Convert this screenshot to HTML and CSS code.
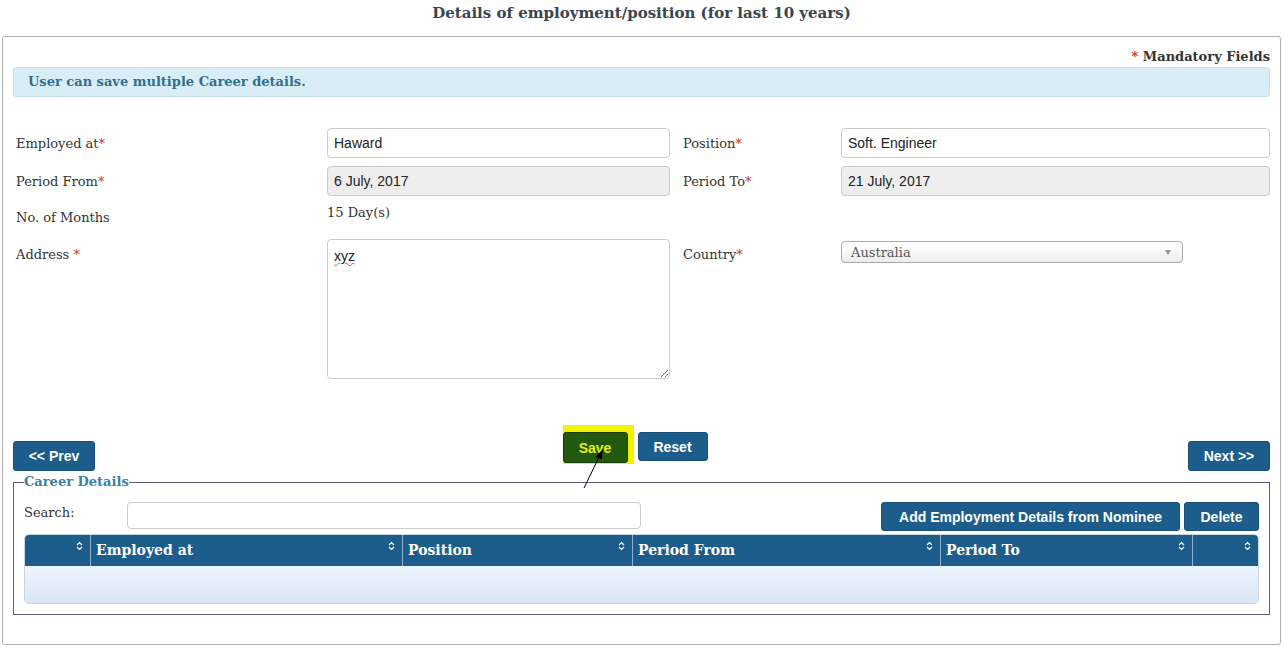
FILE: index.html
```html
<!DOCTYPE html>
<html lang="en">
<head>
    <meta charset="UTF-8">
    <meta name="viewport" content="width=device-width, initial-scale=1.0">
    <title>Career Details</title>
    <link rel="stylesheet" href="styles.css">
</head>
<body>
    <h1 class="page-title">Details of employment/position (for last 10 years)</h1>

    <div class="panel">
        <div class="mandatory"><span class="req">*</span> Mandatory Fields</div>
        <div class="info-bar">User can save multiple Career details.</div>

        <div class="form-grid">
            <label class="lbl">Employed at<span class="req">*</span></label>
            <input class="field" type="text" value="Haward">
            <label class="lbl lbl-right">Position<span class="req">*</span></label>
            <input class="field" type="text" value="Soft. Engineer">

            <label class="lbl">Period From<span class="req">*</span></label>
            <input class="field" type="text" value="6 July, 2017" disabled>
            <label class="lbl lbl-right">Period To<span class="req">*</span></label>
            <input class="field" type="text" value="21 July, 2017" disabled>

            <label class="lbl lbl-months">No. of Months</label>
            <div class="months">15 Day(s)</div>
            <div></div>
            <div></div>

            <label class="lbl lbl-address">Address <span class="req">*</span></label>
            <textarea class="field area">xyz</textarea>
            <label class="lbl lbl-right lbl-address">Country<span class="req">*</span></label>
            <div class="select-box">
                <span>Australia</span>
                <span class="caret"></span>
            </div>
        </div>

        <div class="nav-row">
            <button class="btn btn-prev">&lt;&lt; Prev</button>
            <div class="center-btns">
                <span class="highlight"><button class="btn btn-save">Save</button></span>
                <button class="btn btn-reset">Reset</button>
            </div>
            <button class="btn btn-next">Next &gt;&gt;</button>
        </div>

        <fieldset class="career">
            <legend>Career Details</legend>
            <div class="search-row">
                <label class="search-lbl">Search:</label>
                <input class="search-input" type="text">
                <div class="tool-btns">
                    <button class="btn btn-tool btn-add">Add Employment Details from Nominee</button>
                    <button class="btn btn-tool btn-del">Delete</button>
                </div>
            </div>

            <div class="grid">
                <div class="grid-head">
                    <div class="th th-check"><span></span><svg class="sort" viewBox="0 0 7 10"><path d="M1 4 L3.5 1.5 L6 4 M1 6 L3.5 8.5 L6 6"/></svg></div>
                    <div class="th th-emp"><span>Employed at</span><svg class="sort" viewBox="0 0 7 10"><path d="M1 4 L3.5 1.5 L6 4 M1 6 L3.5 8.5 L6 6"/></svg></div>
                    <div class="th th-pos"><span>Position</span><svg class="sort" viewBox="0 0 7 10"><path d="M1 4 L3.5 1.5 L6 4 M1 6 L3.5 8.5 L6 6"/></svg></div>
                    <div class="th th-from"><span>Period From</span><svg class="sort" viewBox="0 0 7 10"><path d="M1 4 L3.5 1.5 L6 4 M1 6 L3.5 8.5 L6 6"/></svg></div>
                    <div class="th th-to"><span>Period To</span><svg class="sort" viewBox="0 0 7 10"><path d="M1 4 L3.5 1.5 L6 4 M1 6 L3.5 8.5 L6 6"/></svg></div>
                    <div class="th th-act"><span></span><svg class="sort" viewBox="0 0 7 10"><path d="M1 4 L3.5 1.5 L6 4 M1 6 L3.5 8.5 L6 6"/></svg></div>
                </div>
                <div class="grid-body"></div>
            </div>
        </fieldset>
    </div>

    <!-- annotation arrow pointing at Save -->
    <svg class="arrow" width="40" height="56" viewBox="0 0 40 56">
        <line x1="9" y1="48" x2="25" y2="15" stroke="#000" stroke-width="1"/>
        <polygon points="28,9 26.8,19.5 20.5,16.5" fill="#000"/>
    </svg>
</body>
</html>
```

FILE: styles.css
```css
* {
    box-sizing: border-box;
}

body {
    margin: 0;
    padding: 0 4px 0 2px;
    font-family: "DejaVu Serif", serif;
    font-size: 13px;
    color: #333;
    background: #fff;
}

.page-title {
    margin: 0;
    height: 36px;
    line-height: 26px;
    text-align: center;
    font-size: 15px;
    font-weight: bold;
    color: #3a4550;
}

.panel {
    border: 1px solid #b0b0b0;
    border-radius: 3px;
    padding: 10px 10px 29px;
}

.req {
    color: #c9302c;
}

.mandatory {
    text-align: right;
    line-height: 20px;
    font-weight: bold;
    color: #333;
}

.info-bar {
    height: 30px;
    line-height: 28px;
    padding: 0 14px;
    background: #d9edf7;
    border: 1px solid #c4e3f0;
    border-radius: 3px;
    color: #31708f;
    font-weight: bold;
}

/* form */
.form-grid {
    margin-top: 31px;
    display: grid;
    grid-template-columns: 314px 343px 171px 1fr;
    row-gap: 8px;
    align-items: start;
}

.lbl {
    padding: 6px 0 0 3px;
    line-height: 20px;
}

.lbl-right {
    padding-left: 13px;
}

.lbl-months {
    padding-top: 4px;
    height: 27px;
}

.lbl-address {
    padding-top: 6px;
}

.field {
    width: 100%;
    height: 30px;
    padding: 0 6px;
    border: 1px solid #ccc;
    border-radius: 4px;
    font-family: "Liberation Sans", Arial, sans-serif;
    font-size: 14px;
    color: #222;
    background: #fff;
}

.field:disabled {
    background: #eee;
    color: #222;
}

.months {
    line-height: 18px;
}

.area {
    height: 140px;
    padding: 8px 6px;
    resize: vertical;
    text-decoration: underline wavy #d9534f;
    text-decoration-thickness: 1px;
}

.select-box {
    margin-top: 2px;
    width: 342px;
    height: 22px;
    display: flex;
    align-items: center;
    justify-content: space-between;
    padding: 0 11px 0 9px;
    border: 1px solid #aaa;
    border-radius: 4px;
    background: linear-gradient(#fff 20%, #ececec);
    color: #555;
    font-size: 13px;
}

.caret {
    width: 0;
    height: 0;
    border-left: 3px solid transparent;
    border-right: 3px solid transparent;
    border-top: 5px solid #999;
}

/* buttons */
.nav-row {
    margin-top: 46px;
    min-height: 46px;
    display: flex;
    justify-content: space-between;
    align-items: flex-end;
}

.center-btns {
    align-self: flex-start;
    display: flex;
    align-items: flex-start;
    gap: 4px;
    margin-right: 13px;
}

.btn {
    height: 30px;
    padding: 0 14px;
    border: 1px solid #174f78;
    border-radius: 3px;
    background: #1c5d8c;
    color: #fff;
    font-family: "Liberation Sans", Arial, sans-serif;
    font-size: 14px;
    font-weight: bold;
    cursor: pointer;
}

.btn-prev {
    width: 82px;
}

.btn-next {
    width: 82px;
}

.highlight {
    display: block;
    padding: 7px 6px 1px 0;
    background: #f2f200;
}

.btn-save {
    width: 65px;
    height: 31px;
    background: #22590f;
    border-color: #163d08;
    color: #e4ee1c;
}

.btn-reset {
    width: 70px;
    margin-top: 7px;
    height: 29px;
}

/* career details */
.career {
    margin: 2px 0 0;
    padding: 0 10px 10px;
    border: 1px solid #5e5c7e;
    min-width: 0;
}

.career legend {
    padding: 0;
    color: #3a80a8;
    font-weight: bold;
    font-size: 13px;
    line-height: 18px;
}

.search-row {
    margin-top: 11px;
    display: flex;
    align-items: flex-start;
}

.search-lbl {
    width: 103px;
    padding-top: 2px;
    line-height: 18px;
}

.search-input {
    width: 514px;
    height: 27px;
    border: 1px solid #ccc;
    border-radius: 4px;
}

.tool-btns {
    margin-left: auto;
    display: flex;
    gap: 4px;
}

.btn-tool {
    height: 29px;
    padding: 0;
}

.btn-add {
    width: 299px;
}

.btn-del {
    width: 75px;
}

.grid {
    margin-top: 3px;
    border: 1px solid #c8d6e4;
    border-radius: 5px;
    overflow: hidden;
}

.grid-head {
    display: flex;
    height: 31px;
    background: #1c5d8c;
}

.th {
    display: flex;
    justify-content: space-between;
    padding: 0 7px 0 5px;
    border-left: 1px solid #8fb0c9;
    color: #fff;
    font-weight: bold;
    font-size: 14px;
}

.th span {
    line-height: 31px;
}

.th-check { width: 65px; border-left: none; }
.th-emp { width: 312px; }
.th-pos { width: 230px; }
.th-from { width: 308px; }
.th-to { width: 252px; }
.th-act { flex: 1; }

.sort {
    margin-top: 6px;
    width: 7px;
    height: 10px;
    fill: none;
    stroke: #fff;
    stroke-width: 1.2;
}

.grid-body {
    height: 37px;
    background: linear-gradient(#edf4fd, #dae6f5);
}

.arrow {
    position: absolute;
    left: 575px;
    top: 440px;
}
```
